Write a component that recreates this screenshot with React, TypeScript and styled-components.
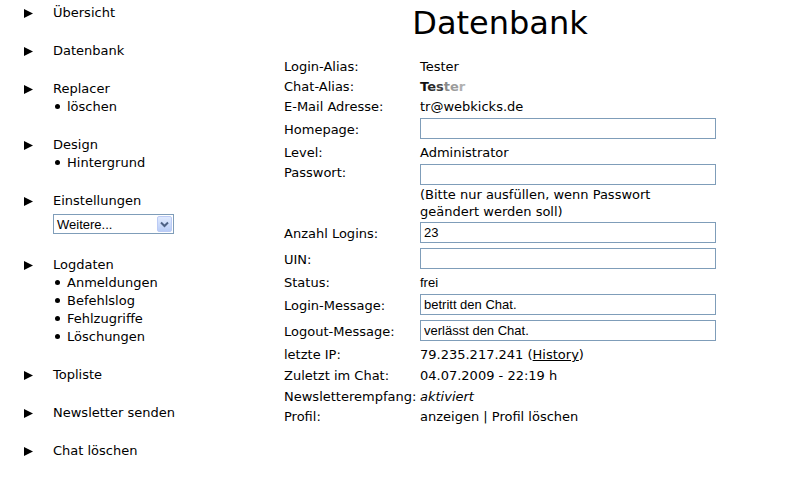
import React from "react";
import styled, { createGlobalStyle } from "styled-components";

const GlobalStyle = createGlobalStyle`
  html, body {
    margin: 0;
    padding: 0;
    background: #fff;
  }
  body {
    font-family: "DejaVu Sans", Verdana, sans-serif;
    font-size: 13px;
    color: #000;
  }
`;

const Page = styled.div`
  display: grid;
  grid-template-columns: 284px 432px;
  width: 795px;
  height: 485px;
  overflow: hidden;
`;

const Nav = styled.nav`
  display: flex;
  flex-direction: column;
  gap: 20px;
  padding: 4px 0 0 24px;
`;

const NavGroup = styled.div`
  display: flex;
  flex-direction: column;
`;

const NavItem = styled.div`
  display: flex;
  align-items: center;
  height: 18px;
  line-height: 18px;
`;

const Arrow = styled.span`
  display: inline-flex;
  width: 29px;
  align-items: center;
`;

const SubItem = styled.div`
  display: flex;
  align-items: center;
  height: 18px;
  line-height: 18px;
  padding-left: 31px;
`;

const Bullet = styled.span`
  width: 5px;
  height: 5px;
  border-radius: 50%;
  background: #000;
  margin-right: 7px;
  margin-bottom: 1px;
`;

const SelectBox = styled.div`
  display: flex;
  align-items: center;
  justify-content: space-between;
  box-sizing: border-box;
  width: 121px;
  height: 20px;
  margin: 4px 0 2px 29px;
  padding: 1px 1px 1px 3px;
  border: 1px solid #7f9db9;
  font-family: "Liberation Sans", Arial, sans-serif;
  font-size: 13px;
`;

const SelectButton = styled.span`
  display: flex;
  align-items: center;
  justify-content: center;
  width: 15px;
  height: 16px;
  box-sizing: border-box;
  border: 1px solid #bccbf5;
  border-radius: 2px;
  background: linear-gradient(#e0eafe, #b9cdf7);
`;

const Main = styled.main`
  display: flex;
  flex-direction: column;
`;

const Heading = styled.h1`
  margin: 5px 0 15px;
  font-size: 32px;
  font-weight: normal;
  line-height: 37px;
  text-align: center;
`;

const Row = styled.div<{ $h: number; $top?: boolean }>`
  display: grid;
  grid-template-columns: 136px 296px;
  min-height: ${(p) => p.$h}px;
  align-items: ${(p) => (p.$top ? "start" : "center")};
  line-height: 20px;
`;

const Label = styled.span`
  white-space: nowrap;
`;

const Value = styled.span<{ $arial?: boolean; $italic?: boolean }>`
  font-family: ${(p) =>
    p.$arial ? `"Liberation Sans", Arial, sans-serif` : "inherit"};
  font-style: ${(p) => (p.$italic ? "italic" : "normal")};
`;

const Field = styled.div`
  display: flex;
  flex-direction: column;
`;

const Input = styled.input`
  align-self: start;
  box-sizing: border-box;
  width: 296px;
  height: 21px;
  margin: 1px 0 0;
  padding: 0 3px;
  border: 1px solid #7f9db9;
  font-family: "Liberation Sans", Arial, sans-serif;
  font-size: 13px;
  color: #000;
  background: #fff;
  outline: none;
`;

const Note = styled.div`
  max-width: 260px;
  line-height: 17px;
  margin-top: 1px;
`;

const Shade = styled.span<{ $c: string }>`
  color: ${(p) => p.$c};
`;

const Alias = styled.span`
  font-weight: bold;
`;

const Link = styled.span`
  text-decoration: underline;
`;

function TriangleIcon() {
  return (
    <svg width="9" height="9" viewBox="0 0 9 9">
      <polygon points="0,0 9,4.5 0,9" fill="#000" />
    </svg>
  );
}

const navGroups: { title: string; subs?: string[]; select?: boolean }[] = [
  { title: "Übersicht" },
  { title: "Datenbank" },
  { title: "Replacer", subs: ["löschen"] },
  { title: "Design", subs: ["Hintergrund"] },
  { title: "Einstellungen", select: true },
  {
    title: "Logdaten",
    subs: ["Anmeldungen", "Befehlslog", "Fehlzugriffe", "Löschungen"],
  },
  { title: "Topliste" },
  { title: "Newsletter senden" },
  { title: "Chat löschen" },
];

const aliasShades = ["#111", "#2a2a2a", "#444", "#8a8a8a", "#9c9c9c", "#b0b0b0"];

export default function App() {
  return (
    <>
      <GlobalStyle />
      <Page>
        <Nav>
          {navGroups.map((g) => (
            <NavGroup key={g.title}>
              <NavItem>
                <Arrow>
                  <TriangleIcon />
                </Arrow>
                {g.title}
              </NavItem>
              {g.subs?.map((s) => (
                <SubItem key={s}>
                  <Bullet />
                  {s}
                </SubItem>
              ))}
              {g.select && (
                <SelectBox>
                  Weitere...
                  <SelectButton>
                    <svg width="9" height="7" viewBox="0 0 9 7">
                      <polyline
                        points="1,1.5 4.5,5 8,1.5"
                        fill="none"
                        stroke="#4d6185"
                        strokeWidth="2"
                      />
                    </svg>
                  </SelectButton>
                </SelectBox>
              )}
            </NavGroup>
          ))}
        </Nav>
        <Main>
          <Heading>Datenbank</Heading>
          <Row $h={20}>
            <Label>Login-Alias:</Label>
            <Value>Tester</Value>
          </Row>
          <Row $h={20}>
            <Label>Chat-Alias:</Label>
            <Alias>
              {"Tester".split("").map((ch, i) => (
                <Shade key={i} $c={aliasShades[i]}>
                  {ch}
                </Shade>
              ))}
            </Alias>
          </Row>
          <Row $h={20}>
            <Label>E-Mail Adresse:</Label>
            <Value>tr@webkicks.de</Value>
          </Row>
          <Row $h={26}>
            <Label>Homepage:</Label>
            <Input readOnly value="" />
          </Row>
          <Row $h={20}>
            <Label>Level:</Label>
            <Value>Administrator</Value>
          </Row>
          <Row $h={58} $top>
            <Label>Passwort:</Label>
            <Field>
              <Input readOnly type="password" value="" />
              <Note>(Bitte nur ausfüllen, wenn Passwort geändert werden soll)</Note>
            </Field>
          </Row>
          <Row $h={26}>
            <Label>Anzahl Logins:</Label>
            <Input readOnly value="23" />
          </Row>
          <Row $h={26}>
            <Label>UIN:</Label>
            <Input readOnly value="" />
          </Row>
          <Row $h={20}>
            <Label>Status:</Label>
            <Value $arial>frei</Value>
          </Row>
          <Row $h={26}>
            <Label>Login-Message:</Label>
            <Input readOnly value="betritt den Chat." />
          </Row>
          <Row $h={26}>
            <Label>Logout-Message:</Label>
            <Input readOnly value="verlässt den Chat." />
          </Row>
          <Row $h={20}>
            <Label>letzte IP:</Label>
            <Value>
              79.235.217.241 (<Link>History</Link>)
            </Value>
          </Row>
          <Row $h={21}>
            <Label>Zuletzt im Chat:</Label>
            <Value>04.07.2009 - 22:19 h</Value>
          </Row>
          <Row $h={21}>
            <Label>Newsletterempfang:</Label>
            <Value $italic>aktiviert</Value>
          </Row>
          <Row $h={20}>
            <Label>Profil:</Label>
            <Value>anzeigen | Profil löschen</Value>
          </Row>
        </Main>
      </Page>
    </>
  );
}
